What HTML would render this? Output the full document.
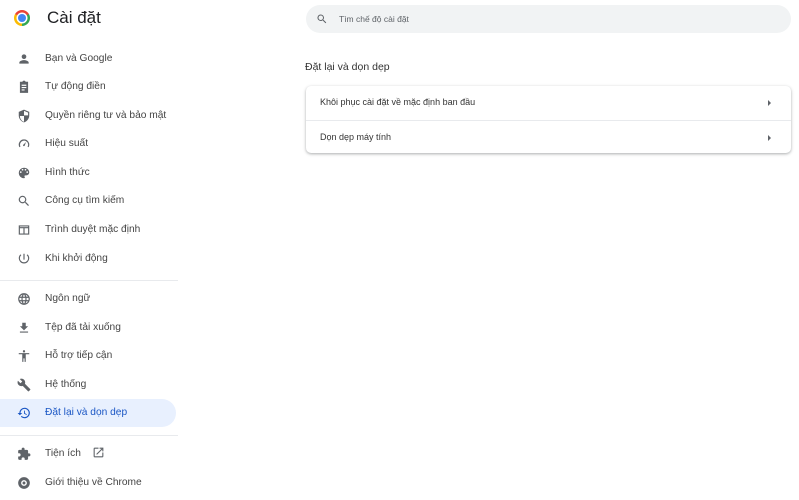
<!DOCTYPE html>
<html><head><meta charset="utf-8"><style>
*{margin:0;padding:0;box-sizing:border-box}
body{width:799px;height:500px;background:#fff;font-family:"Liberation Sans",sans-serif;position:relative;overflow:hidden;color:#202124}
.t{position:absolute;left:47px;top:8px;font-size:17px;color:#202124}
.logo{position:absolute;left:14px;top:10px;width:16px;height:16px;border-radius:50%;background:conic-gradient(from -60deg,#ea4335 0 120deg,#34a853 120deg 240deg,#fbbc04 240deg 360deg)}
.logo:after{content:"";position:absolute;left:4px;top:4px;width:8px;height:8px;border-radius:50%;background:#4285f4;box-shadow:0 0 0 1.5px #fff}
.nav{position:absolute;left:0;height:28px;width:176px;font-size:10.2px;color:#444;line-height:28px;padding-left:45px}
.nav svg{position:absolute;left:17px;top:7px;width:14px;height:14px;fill:#5f6368}
.act{background:#e8f0fe;border-radius:0 14px 14px 0;color:#1a56c4}
.act svg{fill:#1a56c4}
.hr{position:absolute;left:0;width:178px;height:1px;background:#e8eaed}
.search{position:absolute;left:306px;top:5px;width:485px;height:28px;border-radius:14px;background:#f1f3f4;font-size:8.5px;color:#5f6368;line-height:28px;padding-left:33px}
.search svg{position:absolute;left:10px;top:8px;width:12px;height:12px;fill:#5f6368}
.h{position:absolute;left:305px;top:61px;font-size:10.5px;color:#333}
.card{position:absolute;left:306px;top:86px;width:485px;height:67px;border-radius:5px;box-shadow:0 1px 3px rgba(60,64,67,.3),0 1px 2px rgba(60,64,67,.15)}
.row{height:33.5px;line-height:33px;font-size:9px;color:#333;padding-left:14px;position:relative}
.row+.row{border-top:1px solid #e8eaed}
.row:after{content:"";position:absolute;right:20px;top:14px;border-left:3px solid #5f6368;border-top:3px solid transparent;border-bottom:3px solid transparent}
</style></head><body>
<div class="logo"></div><div class="t">Cài đặt</div>
<div class="nav" style="top:45px"><svg viewBox="0 0 24 24"><path d="M12 12a4 4 0 1 0 0-8 4 4 0 0 0 0 8zm0 2c-3 0-8 1.5-8 4v2h16v-2c0-2.5-5-4-8-4z"/></svg>Bạn và Google</div>
<div class="nav" style="top:73px"><svg viewBox="0 0 24 24"><path d="M19 3h-4.2A3 3 0 0 0 12 1a3 3 0 0 0-2.8 2H5v19h14V3zM8 8h8v2H8zm0 4h8v2H8zm0 4h5v2H8z"/></svg>Tự động điền</div>
<div class="nav" style="top:102px"><svg viewBox="0 0 24 24"><path d="M12 1 3 5v6c0 5.5 3.8 10.7 9 12 5.2-1.3 9-6.5 9-12V5l-9-4zm0 11V3.2l7 3.1V11h-7zm0 0v9.9C8 20.7 5 16.8 5 12h7z"/></svg>Quyền riêng tư và bảo mật</div>
<div class="nav" style="top:130px"><svg viewBox="0 0 24 24"><path d="M12 4a9 9 0 0 0-7.8 13.5l1.7-1A7 7 0 1 1 19 12a7 7 0 0 1-.9 4.5l1.7 1A9 9 0 0 0 12 4zm3.5 4.5-4.3 4.3a1.5 1.5 0 1 0 2 2z"/></svg>Hiệu suất</div>
<div class="nav" style="top:159px"><svg viewBox="0 0 24 24"><path d="M12 3a9 9 0 0 0 0 18c1 0 1.5-.7 1.5-1.5 0-.9-.8-1.2-.8-2 0-.8.7-1.5 1.5-1.5H16a5 5 0 0 0 5-5c0-4.4-4-8-9-8zM6.5 12a1.5 1.5 0 1 1 0-3 1.5 1.5 0 0 1 0 3zm3-4a1.5 1.5 0 1 1 0-3 1.5 1.5 0 0 1 0 3zm5 0a1.5 1.5 0 1 1 0-3 1.5 1.5 0 0 1 0 3zm3 4a1.5 1.5 0 1 1 0-3 1.5 1.5 0 0 1 0 3z"/></svg>Hình thức</div>
<div class="nav" style="top:187px"><svg viewBox="0 0 24 24"><path d="M15.5 14h-.8l-.3-.3A6.5 6.5 0 1 0 9.5 16a6.5 6.5 0 0 0 4.2-1.6l.3.3v.8l5 5 1.5-1.5-5-5zm-6 0a4.5 4.5 0 1 1 0-9 4.5 4.5 0 0 1 0 9z"/></svg>Công cụ tìm kiếm</div>
<div class="nav" style="top:216px"><svg viewBox="0 0 24 24"><path d="M3 4h18v16H3zm2 5v9h6V9zm8 0v9h6V9zM5 6v1h14V6z"/></svg>Trình duyệt mặc định</div>
<div class="nav" style="top:245px"><svg viewBox="0 0 24 24"><path d="M11 3h2v10h-2zm5.6 2.4 1.4-1.4A9 9 0 1 1 6 4l1.4 1.4a7 7 0 1 0 9.2 0z"/></svg>Khi khởi động</div>
<div class="hr" style="top:280px"></div>
<div class="nav" style="top:285px"><svg viewBox="0 0 24 24"><path d="M12 2a10 10 0 1 0 0 20 10 10 0 0 0 0-20zm6.9 6h-3a15 15 0 0 0-1.3-3.6A8 8 0 0 1 18.9 8zM12 4c.8 1.2 1.5 2.5 1.9 4h-3.8c.4-1.5 1.1-2.8 1.9-4zM4.3 14a8 8 0 0 1 0-4h3.4a16 16 0 0 0 0 4zm.8 2h3a15 15 0 0 0 1.3 3.6A8 8 0 0 1 5.1 16zm3-8h-3a8 8 0 0 1 4.3-3.6C8.8 5.6 8.4 6.8 8.1 8zM12 20c-.8-1.2-1.5-2.5-1.9-4h3.8c-.4 1.5-1.100 2.8-1.9 4zm2.3-6H9.7a14 14 0 0 1 0-4h4.6a14 14 0 0 1 0 4zm.3 5.6c.6-1.1 1-2.3 1.3-3.6h3a8 8 0 0 1-4.3 3.6zm1.7-5.6a16 16 0 0 0 0-4h3.4a8 8 0 0 1 0 4z"/></svg>Ngôn ngữ</div>
<div class="nav" style="top:314px"><svg viewBox="0 0 24 24"><path d="M19 9h-4V3H9v6H5l7 7 7-7zM5 18v2h14v-2z"/></svg>Tệp đã tải xuống</div>
<div class="nav" style="top:342px"><svg viewBox="0 0 24 24"><path d="M12 2a2 2 0 1 1 0 4 2 2 0 0 1 0-4zm9 7h-6v13h-2v-6h-2v6H9V9H3V7h18z"/></svg>Hỗ trợ tiếp cận</div>
<div class="nav" style="top:371px"><svg viewBox="0 0 24 24"><path d="M22.7 19 13.6 9.9c.9-2.3.4-5-1.5-6.9-2-2-5-2.4-7.4-1.3L9 6 6 9 1.6 4.7C.4 7.1.9 10.1 2.9 12.1c1.900 1.900 4.600 2.400 6.9 1.5l9.1 9.1c.4.4 1 .4 1.4 0l2.3-2.3c.5-.4.5-1.100.1-1.400z"/></svg>Hệ thống</div>
<div class="nav act" style="top:399px"><svg viewBox="0 0 24 24"><path d="M13 3a9 9 0 0 0-9 9H1l3.9 3.9L9 12H6a7 7 0 1 1 2.1 5l-1.4 1.4A9 9 0 1 0 13 3zm-1 5v5l4.3 2.5.7-1.2-3.5-2.1V8z"/></svg>Đặt lại và dọn dẹp</div>
<div class="hr" style="top:435px"></div>
<div class="nav" style="top:440px"><svg viewBox="0 0 24 24"><path d="M20.5 11H19V7a2 2 0 0 0-2-2h-4V3.5a2.5 2.5 0 0 0-5 0V5H4a2 2 0 0 0-2 2v3.8h1.5a2.7 2.7 0 0 1 0 5.4H2V20a2 2 0 0 0 2 2h3.8v-1.5a2.7 2.7 0 0 1 5.4 0V22H17a2 2 0 0 0 2-2v-4h1.5a2.5 2.5 0 0 0 0-5z"/></svg>Tiện ích <svg style="position:static;vertical-align:-3px;margin-left:8px;width:13px;height:13px" viewBox="0 0 24 24"><path d="M19 19H5V5h7V3H5a2 2 0 0 0-2 2v14a2 2 0 0 0 2 2h14a2 2 0 0 0 2-2v-7h-2zM14 3v2h3.6l-9.8 9.8 1.4 1.4L19 6.4V10h2V3z"/></svg></div>
<div class="nav" style="top:469px"><svg viewBox="0 0 24 24"><path d="M12 2a10 10 0 1 0 0 20 10 10 0 0 0 0-20zm0 15a5 5 0 1 1 0-10 5 5 0 0 1 0 10zm0-7.5a2.5 2.5 0 1 0 0 5 2.5 2.5 0 0 0 0-5z"/></svg>Giới thiệu về Chrome</div>
<div class="search"><svg viewBox="0 0 24 24"><path d="M15.5 14h-.8l-.3-.3A6.5 6.5 0 1 0 9.5 16a6.5 6.5 0 0 0 4.2-1.6l.3.3v.8l5 5 1.5-1.5-5-5zm-6 0a4.5 4.5 0 1 1 0-9 4.5 4.5 0 0 1 0 9z"/></svg>Tìm chế độ cài đặt</div>
<div class="h">Đặt lại và dọn dẹp</div>
<div class="card"><div class="row">Khôi phục cài đặt về mặc định ban đầu</div><div class="row">Dọn dẹp máy tính</div></div>
</body></html>
